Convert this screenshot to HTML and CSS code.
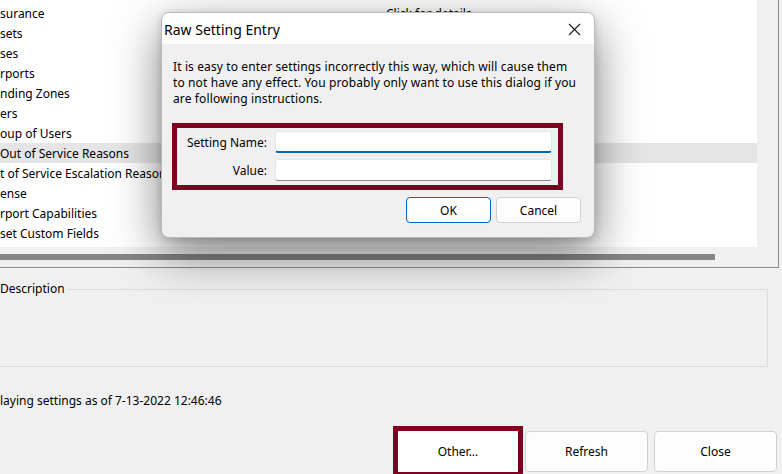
FILE: index.html
```html
<!DOCTYPE html>
<html lang="en">
<head>
    <meta charset="UTF-8">
    <title>Settings</title>
    <link rel="stylesheet" href="styles.css">
</head>
<body>
    <div class="window">
        <div class="list-panel">
            <div class="list">
                <div class="row"><span>surance</span><span>Click for details</span></div>
                <div class="row"><span>sets</span><span></span></div>
                <div class="row"><span>ses</span><span></span></div>
                <div class="row"><span>rports</span><span></span></div>
                <div class="row"><span>nding Zones</span><span></span></div>
                <div class="row"><span>ers</span><span></span></div>
                <div class="row"><span>oup of Users</span><span></span></div>
                <div class="row selected"><span>Out of Service Reasons</span><span></span></div>
                <div class="row"><span>t of Service Escalation Reasons</span><span></span></div>
                <div class="row"><span>ense</span><span></span></div>
                <div class="row"><span>rport Capabilities</span><span></span></div>
                <div class="row"><span>set Custom Fields</span><span></span></div>
            </div>
            <div class="vtrack"></div>
            <div class="htrack"><div class="thumb"></div></div>
            <div class="corner"></div>
        </div>

        <fieldset class="group">
            <legend>Description</legend>
        </fieldset>

        <div class="status">laying settings as of 7-13-2022 12:46:46</div>

        <div class="actions">
            <div class="mark"><button class="btn other">Other...</button></div>
            <button class="btn">Refresh</button>
            <button class="btn">Close</button>
        </div>
    </div>

    <div class="dialog">
        <div class="dlg-title">
            <span>Raw Setting Entry</span>
            <svg class="dlg-close" width="13" height="13" viewBox="0 0 13 13">
                <path d="M1 1 L12 12 M12 1 L1 12" stroke="#1b1b1b" stroke-width="1.1" fill="none"/>
            </svg>
        </div>
        <div class="dlg-body">
            <p class="dlg-msg">It is easy to enter settings incorrectly this way, which will cause them<br>to not have any effect. You probably only want to use this dialog if you<br>are following instructions.</p>
            <div class="mark form">
                <label>Setting Name:</label>
                <input type="text" class="field focused">
                <label>Value:</label>
                <input type="text" class="field">
            </div>
            <div class="dlg-buttons">
                <button class="btn small ok">OK</button>
                <button class="btn small">Cancel</button>
            </div>
        </div>
    </div>
</body>
</html>
```

FILE: styles.css
```css
* {
    margin: 0;
    padding: 0;
    box-sizing: border-box;
}
body {
    width: 782px;
    height: 474px;
    overflow: hidden;
    background: #f0f0f0;
    font-family: "Noto Sans", "Liberation Sans", sans-serif;
    font-size: 12px;
    color: #000;
    position: relative;
}
.window {
    display: flex;
    flex-direction: column;
}

/* list */
.list-panel {
    width: 779px;
    height: 268px;
    display: grid;
    grid-template-columns: 757px 21px;
    grid-template-rows: 247px 20px;
    border-right: 1px solid #8c8c8c;
    border-bottom: 1px solid #8c8c8c;
}
.list {
    background: #fff;
    padding-top: 3px;
    overflow: hidden;
}
.row {
    display: grid;
    grid-template-columns: 386px 1fr;
    height: 20px;
    line-height: 22px;
    white-space: nowrap;
}
.row.selected {
    background: #e5e5e5;
}
.vtrack, .corner {
    background: #f0f0f0;
}
.htrack {
    background: #f0f0f0;
    padding-top: 7px;
}
.thumb {
    width: 715px;
    height: 6px;
    background: #858585;
}

/* description */
.group {
    margin: 12px 14px 0 -11px;
    height: 87px;
    padding: 0 10px;
    border: 1px solid #dadada;
}
.group legend {
    padding: 0 2px 0 0;
    line-height: 18px;
}
.status {
    margin-top: 24px;
    height: 20px;
    line-height: 20px;
}

/* bottom buttons */
.actions {
    margin-top: 15px;
    display: flex;
    justify-content: flex-end;
    align-items: flex-start;
    padding-right: 5px;
}
.btn {
    font: inherit;
    color: #000;
    width: 123px;
    height: 41px;
    background: #fdfdfd;
    border: 1px solid #d0d0d0;
    border-radius: 4px;
}
.actions > .btn {
    margin-top: 5px;
    margin-left: 6px;
}
.mark {
    border: 5px solid #80001f;
}
.actions .mark {
    margin-right: -4px;
}
.btn.other {
    width: 120px;
    display: block;
    border-color: #fff;
    background: #fff;
    border-radius: 0;
}

/* dialog */
.dialog {
    position: absolute;
    left: 161px;
    top: 12px;
    width: 434px;
    height: 226px;
    border: 1px solid #b9b9b9;
    border-radius: 8px;
    overflow: hidden;
    background: #f0f0f0;
    box-shadow: 0 16px 48px rgba(0, 0, 0, 0.5), 0 2px 8px rgba(0, 0, 0, 0.15);
    display: flex;
    flex-direction: column;
}
.dlg-title {
    height: 31px;
    background: #fff;
    display: flex;
    align-items: center;
    justify-content: space-between;
    padding: 1px 13px 0 2px;
    font-size: 14px;
}
.dlg-body {
    padding: 15px 13px 0 10px;
}
.dlg-msg {
    padding-left: 1px;
    line-height: 16px;
    letter-spacing: 0.12px;
    white-space: nowrap;
}
.form {
    margin-top: 16px;
    width: 391px;
    display: grid;
    grid-template-columns: 90px 1fr;
    column-gap: 8px;
    row-gap: 6px;
    align-items: center;
    padding: 3px 6px 4px 0;
}
.form label {
    text-align: right;
}
.field {
    height: 22px;
    background: #fff;
    border: 1px solid #e6e6e6;
    border-bottom-color: #8a8a8a;
    border-radius: 3px;
    outline: none;
}
.field.focused {
    border-bottom: 2px solid #0067c0;
}
.dlg-buttons {
    margin-top: 7px;
    display: flex;
    justify-content: flex-end;
    gap: 5px;
}
.btn.small {
    width: 85px;
    height: 26px;
}
.btn.ok {
    border-color: #0067c0;
}
```
